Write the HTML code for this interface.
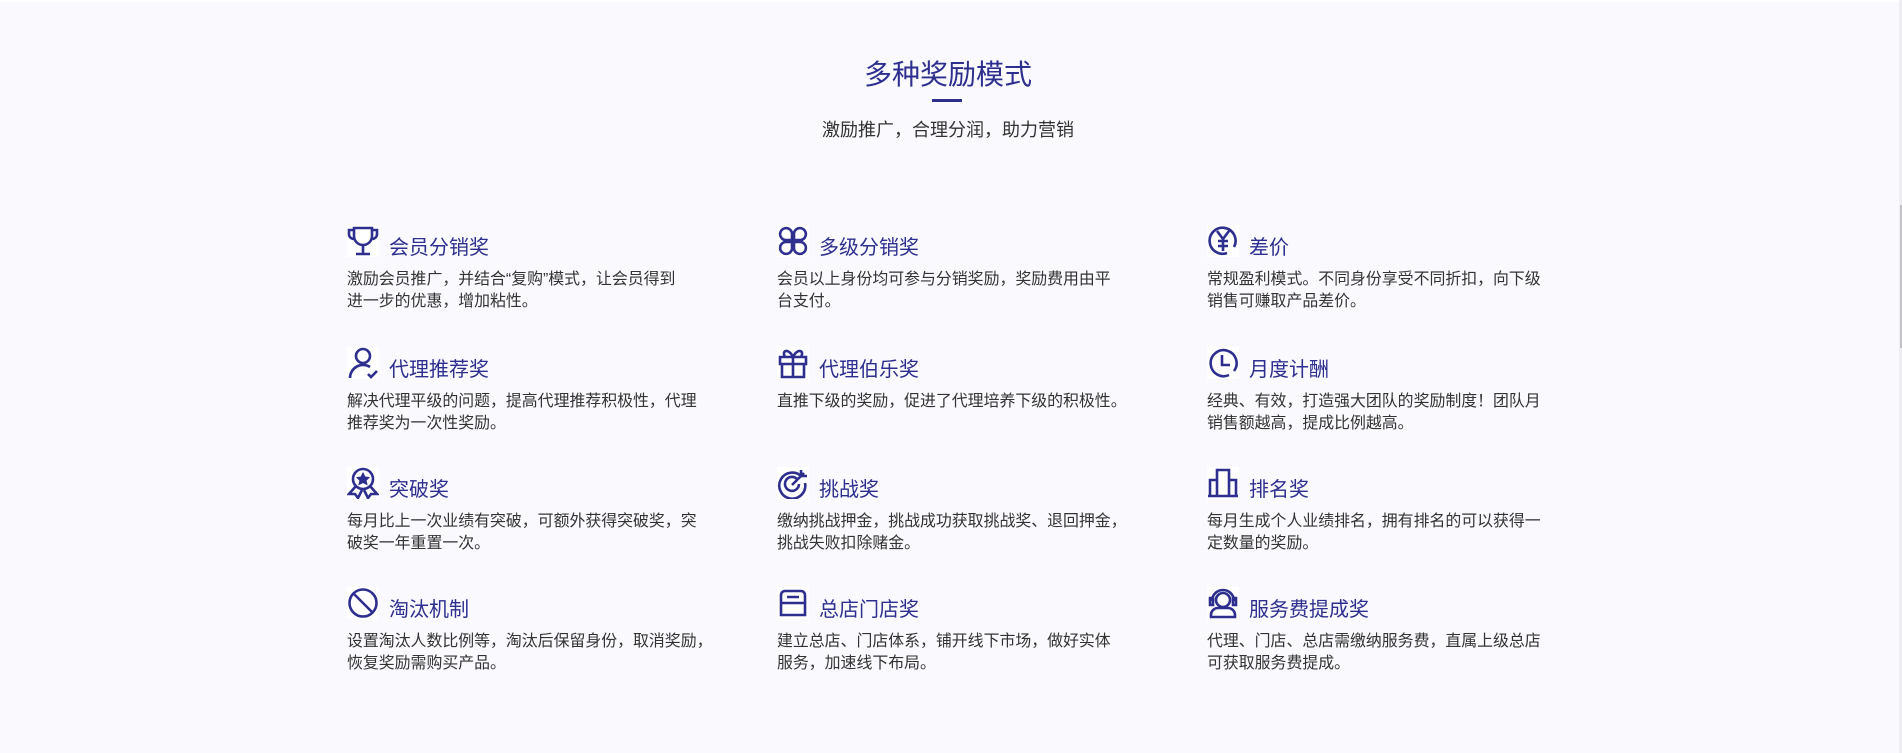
<!DOCTYPE html>
<html><head><meta charset="utf-8">
<style>
html,body{margin:0;padding:0;}
body{width:1902px;height:753px;background:#f9f9fe;position:relative;overflow:hidden;font-family:"Liberation Sans","Noto Sans CJK SC",sans-serif;}
.top{position:absolute;left:0;top:0;width:1899px;height:2px;background:#fff;}
.sb{position:absolute;right:0;top:0;width:3px;height:753px;background:#eeeef2;}
.thumb{position:absolute;right:0;top:205px;width:2px;height:143px;background:#c4c4c8;}
h1{position:absolute;left:0;width:1896px;top:57px;margin:0;text-align:center;font-size:28px;font-weight:normal;color:#2d2e8e;line-height:36px;}
.line{position:absolute;left:932px;top:99px;width:30px;height:3px;background:#2d2e8e;}
.sub{position:absolute;left:0;width:1896px;top:117px;text-align:center;font-size:18px;color:#333;line-height:26px;}
.item{position:absolute;width:380px;}
.item svg{position:absolute;left:0;top:0;width:32px;height:32px;background:#fff;}
.item .t{position:absolute;left:42px;top:9px;font-size:20px;color:#2d2e8e;line-height:28px;white-space:nowrap;}
.item .d{position:absolute;left:0;top:44px;font-size:15.9px;color:#333;line-height:22px;white-space:nowrap;}
svg *{fill:none;stroke:#2d2e8e;stroke-width:2.6;}
</style></head><body>
<div class="top"></div><div class="sb"></div><div class="thumb"></div>
<h1>多种奖励模式</h1>
<div class="line"></div>
<div class="sub">激励推广，合理分润，助力营销</div>

<div class="item" style="left:347px;top:225px">
<svg viewBox="0 0 32 32"><path d="M7 3h18v8a9 9 0 0 1-18 0z M7 5H2v5a5 5 0 0 0 5 4 M25 5h5v5a5 5 0 0 1-5 4 M16 20v8 M9 29h14"/></svg>
<div class="t">会员分销奖</div>
<div class="d">激励会员推广，并结合“复购”模式，让会员得到<br>进一步的优惠，增加粘性。</div></div>

<div class="item" style="left:777px;top:225px">
<svg viewBox="0 0 32 32"><path d="M15 15H8a6 6 0 1 1 7-7z M17 15h7a6 6 0 1 0-7-7z M15 17H8a6 6 0 1 0 7 7z M17 17h7a6 6 0 1 1-7 7z"/></svg>
<div class="t">多级分销奖</div>
<div class="d">会员以上身份均可参与分销奖励，奖励费用由平<br>台支付。</div></div>

<div class="item" style="left:1207px;top:225px">
<svg viewBox="0 0 32 32"><path d="M27 22A13 13 0 1 0 20 28 M10 6l6 8 6-8 M16 14v12 M11 16h10 M11 21h10"/></svg>
<div class="t">差价</div>
<div class="d">常规盈利模式。不同身份享受不同折扣，向下级<br>销售可赚取产品差价。</div></div>

<div class="item" style="left:347px;top:347px">
<svg viewBox="0 0 32 32"><path d="M16 2a7 7 0 1 1 0 14a7 7 0 1 1 0-14z M3 31a13 13 0 0 1 20-11 M21 27l3 3 6-6"/></svg>
<div class="t">代理推荐奖</div>
<div class="d">解决代理平级的问题，提高代理推荐积极性，代理<br>推荐奖为一次性奖励。</div></div>

<div class="item" style="left:777px;top:347px">
<svg viewBox="0 0 32 32"><path d="M3 10h26v7H3z M5 17h22v13H5z M16 10v20 M16 10c-4-9-12-7-8 0 M16 10c4-9 12-7 8 0"/></svg>
<div class="t">代理伯乐奖</div>
<div class="d">直推下级的奖励，促进了代理培养下级的积极性。</div></div>

<div class="item" style="left:1207px;top:347px">
<svg viewBox="0 0 32 32"><path d="M27 24A13 13 0 1 0 22 28 M15 8v10h8"/></svg>
<div class="t">月度计酬</div>
<div class="d">经典、有效，打造强大团队的奖励制度！团队月<br>销售额越高，提成比例越高。</div></div>

<div class="item" style="left:347px;top:467px">
<svg viewBox="0 0 32 32"><circle cx="16" cy="12" r="10"/><path d="M16 6l2 4 4 .5-3 3 1 4-4-2-4 2 1-4-3-3 4-.5z" style="fill:#2d2e8e;stroke-width:1"/><path d="M9 19l-7 8 6 0 3 4 4-8 M23 19l7 8-6 0-3 4-4-8"/></svg>
<div class="t">突破奖</div>
<div class="d">每月比上一次业绩有突破，可额外获得突破奖，突<br>破奖一年重置一次。</div></div>

<div class="item" style="left:777px;top:467px">
<svg viewBox="0 0 32 32"><path d="M25 10A13 13 0 1 0 28 16 M20 12a7 7 0 1 0 2 5 M15 18L27 6 M24 3v6h6"/></svg>
<div class="t">挑战奖</div>
<div class="d">缴纳挑战押金，挑战成功获取挑战奖、退回押金，<br>挑战失败扣除赌金。</div></div>

<div class="item" style="left:1207px;top:467px">
<svg viewBox="0 0 32 32"><path d="M1 29h30 M3 29V13h7v16 M10 29V3h12v26 M22 29V13h7v16"/></svg>
<div class="t">排名奖</div>
<div class="d">每月生成个人业绩排名，拥有排名的可以获得一<br>定数量的奖励。</div></div>

<div class="item" style="left:347px;top:587px">
<svg viewBox="0 0 32 32"><circle cx="16" cy="16" r="13.5"/><path d="M6.5 6.5l19 19"/></svg>
<div class="t">淘汰机制</div>
<div class="d">设置淘汰人数比例等，淘汰后保留身份，取消奖励，<br>恢复奖励需购买产品。</div></div>

<div class="item" style="left:777px;top:587px">
<svg viewBox="0 0 32 32"><path d="M4 8a4 4 0 0 1 4-4h16a4 4 0 0 1 4 4v20H4z M4 16h24 M10 10h12"/></svg>
<div class="t">总店门店奖</div>
<div class="d">建立总店、门店体系，铺开线下市场，做好实体<br>服务，加速线下布局。</div></div>

<div class="item" style="left:1207px;top:587px">
<svg viewBox="0 0 32 32"><circle cx="16" cy="13" r="7"/><path d="M4 30v-2a7 7 0 0 1 7-7h10a7 7 0 0 1 7 7v2z M5 14a11 11 0 0 1 22 0 M3 11h3v7H3z M26 11h3v7h-3z"/></svg>
<div class="t">服务费提成奖</div>
<div class="d">代理、门店、总店需缴纳服务费，直属上级总店<br>可获取服务费提成。</div></div>
</body></html>
